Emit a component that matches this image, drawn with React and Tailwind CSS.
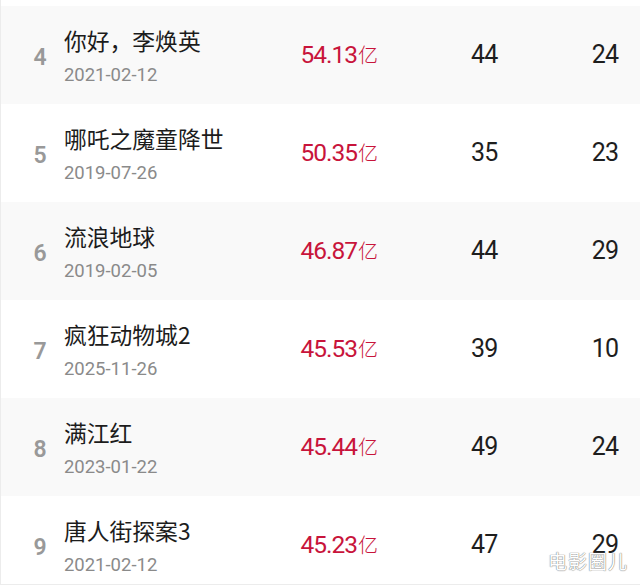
const rows = [
  { rank: 4, title: "你好，李焕英", date: "2021-02-12", amount: "54.13", a: "44", b: "24" },
  { rank: 5, title: "哪吒之魔童降世", date: "2019-07-26", amount: "50.35", a: "35", b: "23" },
  { rank: 6, title: "流浪地球", date: "2019-02-05", amount: "46.87", a: "44", b: "29" },
  { rank: 7, title: "疯狂动物城2", date: "2025-11-26", amount: "45.53", a: "39", b: "10" },
  { rank: 8, title: "满江红", date: "2023-01-22", amount: "45.44", a: "49", b: "24" },
  { rank: 9, title: "唐人街探案3", date: "2021-02-12", amount: "45.23", a: "47", b: "29" },
];

const num = "font-['Roboto','Noto_Sans_CJK_SC',sans-serif]";
const cjk = "font-['Noto_Sans_CJK_SC','Noto_Sans',sans-serif]";

export default function App() {
  return (
    <div className="w-[640px] h-[586px] bg-white overflow-hidden">
      <div className="relative h-[585px] overflow-hidden border-b border-l border-[#ececec] pt-[6px]">
        {rows.map((r, i) => (
          <div
            key={r.rank}
            className={`h-[98px] flex items-center ${i % 2 === 0 ? "bg-[#f9f9f9]" : "bg-white"}`}
          >
            <div className={`w-[63px] pl-[15px] pt-[7px] text-center text-[23px] font-semibold text-[#999999] ${num}`}>
              {r.rank}
            </div>
            <div className="w-[237px] flex flex-col pt-[4px]">
              <div className={`h-[30px] leading-[30px] text-[22.8px] text-[#1c1c1c] ${cjk}`}>{r.title}</div>
              <div className={`mt-[5px] h-[28px] leading-[28px] text-[18.5px] text-[#8a8a8a] ${num}`}>{r.date}</div>
            </div>
            <div className={`w-[124px] flex items-baseline text-[#c8143b] ${num}`}>
              <span className="text-[24.5px] tracking-[-1px]">{r.amount}</span>
              <span className={`text-[20px] font-light ml-[1px] ${cjk}`}>亿</span>
            </div>
            <div className={`w-[120px] text-center text-[25px] tracking-[-0.8px] text-[#1e1e1e] ${num}`}>{r.a}</div>
            <div className={`w-[96px] pl-[26px] text-center text-[25px] tracking-[-0.8px] text-[#1e1e1e] ${num}`}>{r.b}</div>
          </div>
        ))}
        <div
          className={`absolute right-[12px] bottom-[12px] text-[19px] leading-[22px] tracking-[1px] text-white [text-shadow:0_0_1px_#777,0_0_1px_#777] ${cjk}`}
        >
          电影圈儿
        </div>
      </div>
    </div>
  );
}
